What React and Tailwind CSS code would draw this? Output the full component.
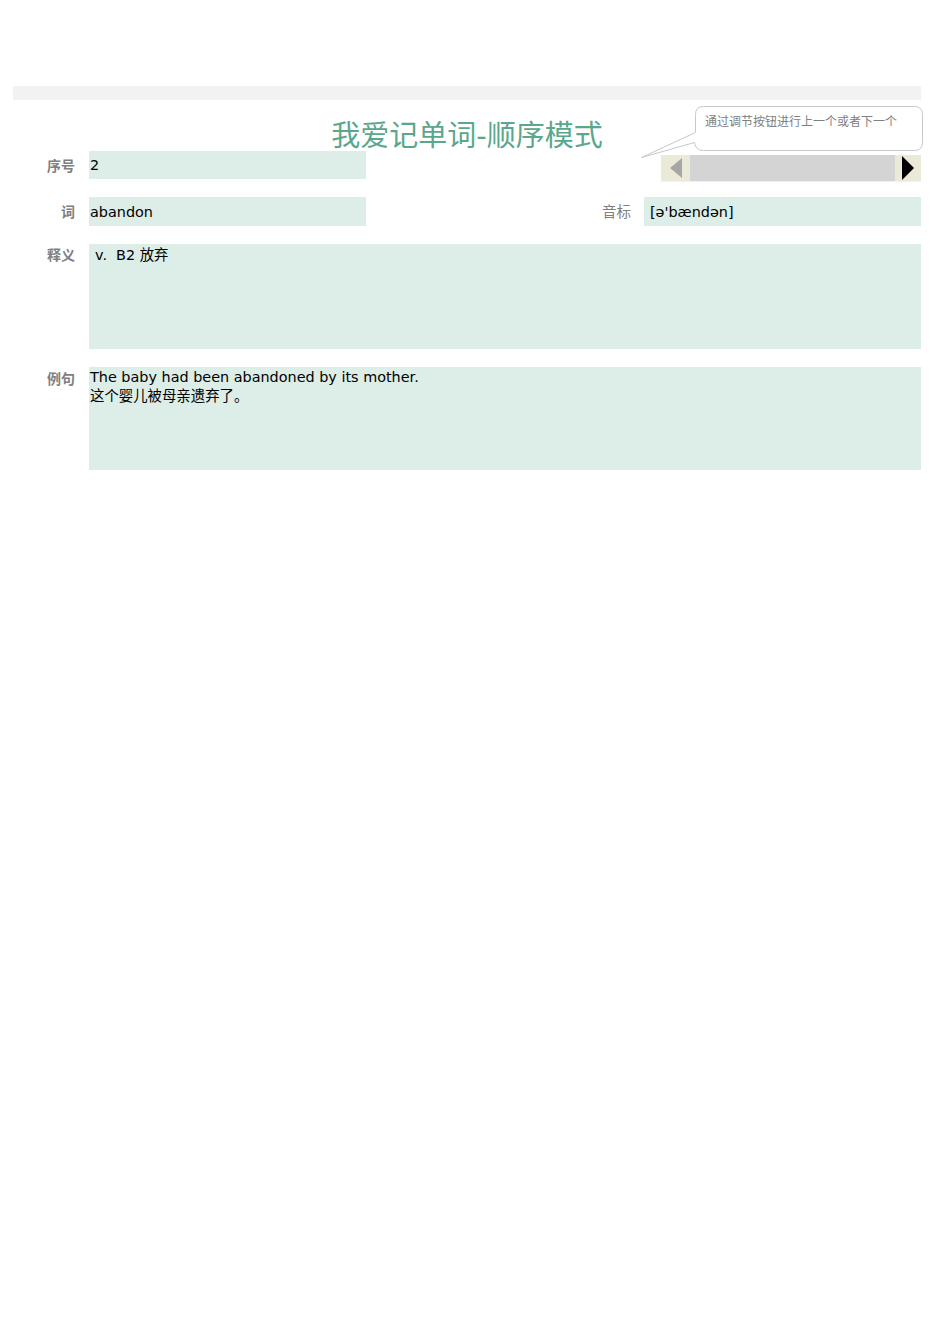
import React from 'react';

const font = { fontFamily: '"DejaVu Sans", "Noto Sans CJK SC", sans-serif' };

const Label = ({ children, className = '' }) => (
  <div className={`w-[76px] shrink-0 pr-[14px] text-right text-[14px] font-bold text-[#7f7f7f] ${className}`}>
    {children}
  </div>
);

const ScrollBar = () => (
  <div className="ml-auto mt-[4px] flex h-[27px] w-[260px] shrink-0 border-b border-[#f0f0f0]">
    <div className="flex w-[29px] items-center justify-center bg-[#ebe9d8]">
      <svg width="14" height="20" viewBox="0 0 14 20">
        <path d="M13 0 L1 10 L13 20 Z" fill="#a6a6a6" />
      </svg>
    </div>
    <div className="flex-1 bg-[#d4d4d4]" />
    <div className="flex w-[26px] items-center justify-center bg-[#ebe9d8]">
      <svg width="12" height="24" viewBox="0 0 12 24">
        <path d="M0 0 L12 12 L0 24 Z" fill="#000" />
      </svg>
    </div>
  </div>
);

const Callout = () => (
  <div className="absolute left-[627px] top-[4px] h-[56px] w-[290px]">
    <svg width="290" height="56" viewBox="0 0 290 56" className="absolute left-0 top-0">
      <path
        d="M63.5 2.5 H274.5 Q282.5 2.5 282.5 10.5 V38.5 Q282.5 46.5 274.5 46.5 H63.5 Q55.5 46.5 54.5 38.5 L1.5 53.5 L55.5 28.5 V10.5 Q55.5 2.5 63.5 2.5 Z"
        fill="#fff"
        stroke="#c8c8c8"
        strokeWidth="1"
      />
    </svg>
    <div className="absolute left-[65px] top-[10px] whitespace-nowrap text-[12px] leading-[16px] text-[#808080]">
      通过调节按钮进行上一个或者下一个
    </div>
  </div>
);

export default function App() {
  return (
    <div className="min-h-[1344px] w-[950px] bg-white pt-[86px] text-black" style={font}>
      <div className="mx-[13px] w-[908px]">
        <div className="h-[14px] bg-[#f2f2f2]" />

        <div className="relative">
          <Callout />
          <h1 className="h-[51px] pt-[18px] text-center text-[29px] font-normal leading-[36px] text-[#5ba78b]">
            我爱记单词-顺序模式
          </h1>
        </div>

        {/* 序号 */}
        <div className="flex h-[28px] items-start">
          <Label className="leading-[30px]">序号</Label>
          <div className="h-[28px] w-[277px] bg-[#ddede7] pl-[1px] text-[14.4px] leading-[28px]">2</div>
          <ScrollBar />
        </div>

        {/* 词 / 音标 */}
        <div className="mt-[18px] flex h-[29px] items-center">
          <Label className="leading-[32px]">词</Label>
          <div className="h-[29px] w-[277px] bg-[#ddede7] pl-[1px] text-[14.4px] leading-[30px]">abandon</div>
          <div className="ml-auto pr-[13px] text-[14.5px] leading-[32px] text-[#808080]">音标</div>
          <div className="h-[29px] w-[277px] bg-[#ddede7] pl-[6px] text-[14.4px] leading-[30px]">[ə'bændən]</div>
        </div>

        {/* 释义 */}
        <div className="mt-[18px] flex">
          <Label className="pt-[1px] leading-[20px]">释义</Label>
          <div className="h-[105px] flex-1 bg-[#ddede7] pl-[6px] pt-[1px] text-[14.4px] leading-[20px]">
            v.&nbsp;&nbsp;B2 放弃
          </div>
        </div>

        {/* 例句 */}
        <div className="mt-[18px] flex">
          <Label className="pt-[2px] leading-[20px]">例句</Label>
          <div className="h-[103px] flex-1 bg-[#ddede7] pl-[1px] pt-[1px] text-[14.4px] leading-[19px]">
            <div>The baby had been abandoned by its mother.</div>
            <div>这个婴儿被母亲遗弃了。</div>
          </div>
        </div>
      </div>
    </div>
  );
}
